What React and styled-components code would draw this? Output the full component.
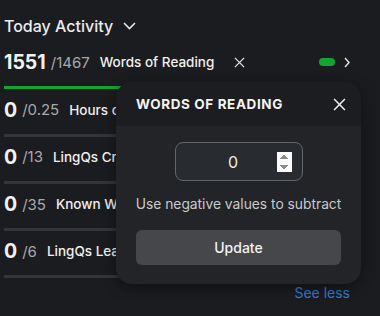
import styled, { createGlobalStyle } from "styled-components";

const GlobalStyle = createGlobalStyle`
	body {
		margin: 0;
		background-color: #1b1c1f;
		font-family: Inter, "Noto Sans", sans-serif;
		color: #ececec;
	}
`;

const Container = styled.div`
	position: relative;
	width: 346px;
	padding: 16px 0 0 4px;
`;

const Heading = styled.div`
	display: flex;
	align-items: center;
	gap: 10px;
	height: 20px;
	font-size: 16px;
	font-weight: 500;
	margin-bottom: 6px;
`;

const Row = styled.div`
	padding-top: 8.3px;
`;

const RowLine = styled.div`
	display: flex;
	align-items: center;
	height: 24px;
`;

const Count = styled.span`
	font-size: 19.5px;
	font-weight: 700;
	color: #f2f2f2;
	margin-right: 5px;
`;

const Goal = styled.span`
	font-size: 15px;
	color: #a8a9ab;
	margin-right: 10px;
`;

const Label = styled.span`
	font-size: 13.5px;
	font-weight: 500;
	color: #f0f0f0;
	white-space: nowrap;
`;

const RemoveButton = styled.span`
	display: flex;
	margin-left: 20px;
`;

const Spacer = styled.div`
	flex: 1;
`;

const Pill = styled.span`
	width: 16px;
	height: 8px;
	border-radius: 4px;
	background-color: #12a531;
	margin-right: 9px;
`;

const Bar = styled.div`
	height: 3px;
	margin-top: 12px;
	background-color: ${(props) => (props.done ? "#12a531" : "#34353a")};
`;

const SeeLess = styled.div`
	text-align: right;
	margin-top: 6px;
	font-size: 14px;
	color: #2e7fd9;
`;

const Popover = styled.div`
	position: absolute;
	left: 116px;
	top: 82px;
	width: 245px;
	border-radius: 16px;
	overflow: hidden;
	background-color: #222428;
	box-shadow: 0 4px 14px rgba(0, 0, 0, 0.45);
`;

const PopHeader = styled.div`
	height: 44px;
	display: flex;
	align-items: center;
	justify-content: space-between;
	padding: 0 15px 0 20px;
	background-color: #1c1d20;
	font-size: 13.5px;
	font-weight: 700;
	letter-spacing: 0.6px;
	color: #f4f4f4;
`;

const PopBody = styled.div`
	display: flex;
	flex-direction: column;
	align-items: center;
	padding: 16px 20px 19px;
`;

const NumberInput = styled.input`
	width: 128px;
	height: 39px;
	box-sizing: border-box;
	border: 1px solid #62656a;
	border-radius: 8px;
	background-color: #282b2f;
	color: #ececec;
	font-family: inherit;
	font-size: 16px;
	text-align: center;
	padding: 0 10px 0 14px;
	outline: none;

	&::-webkit-inner-spin-button {
		opacity: 1;
	}
`;

const Hint = styled.p`
	margin: 15px 0 0;
	font-size: 13.8px;
	color: #c9cacc;
	white-space: nowrap;
`;

const UpdateButton = styled.button`
	margin-top: 18px;
	width: 100%;
	height: 35px;
	border: none;
	border-radius: 6px;
	background-color: #45474b;
	color: #f2f2f2;
	font-family: inherit;
	font-size: 14px;
	font-weight: 500;
`;

const Cross = ({ size = 11, color = "#e6e6e6" }) => (
	<svg width={size} height={size} viewBox="0 0 12 12">
		<path d="M1 1L11 11M11 1L1 11" stroke={color} strokeWidth="1.4" />
	</svg>
);

const stats = [
	{ count: "0", goal: "/0.25", label: "Hours of Listening" },
	{ count: "0", goal: "/13", label: "LingQs Created" },
	{ count: "0", goal: "/35", label: "Known Words" },
	{ count: "0", goal: "/6", label: "LingQs Learned" },
];

const App = () => {
	return (
		<>
			<GlobalStyle />
			<Container>
				<Heading>
					Today Activity
					<svg width="13" height="8" viewBox="0 0 13 8">
						<path d="M1 1L6.5 6.5L12 1" stroke="#e6e6e6" strokeWidth="1.6" fill="none" />
					</svg>
				</Heading>
				<Row>
					<RowLine>
						<Count>1551</Count>
						<Goal>/1467</Goal>
						<Label>Words of Reading</Label>
						<RemoveButton>
							<Cross />
						</RemoveButton>
						<Spacer />
						<Pill />
						<svg width="6" height="11" viewBox="0 0 6 11">
							<path d="M1 1L5 5.5L1 10" stroke="#e6e6e6" strokeWidth="1.4" fill="none" />
						</svg>
					</RowLine>
					<Bar done />
				</Row>
				{stats.map((s) => (
					<Row key={s.label}>
						<RowLine>
							<Count>{s.count}</Count>
							<Goal>{s.goal}</Goal>
							<Label>{s.label}</Label>
						</RowLine>
						<Bar />
					</Row>
				))}
				<SeeLess>See less</SeeLess>
				<Popover>
					<PopHeader>
						WORDS OF READING
						<Cross size={13} color="#f0f0f0" />
					</PopHeader>
					<PopBody>
						<NumberInput type="number" defaultValue={0} />
						<Hint>Use negative values to subtract</Hint>
						<UpdateButton>Update</UpdateButton>
					</PopBody>
				</Popover>
			</Container>
		</>
	);
};

export default App;
